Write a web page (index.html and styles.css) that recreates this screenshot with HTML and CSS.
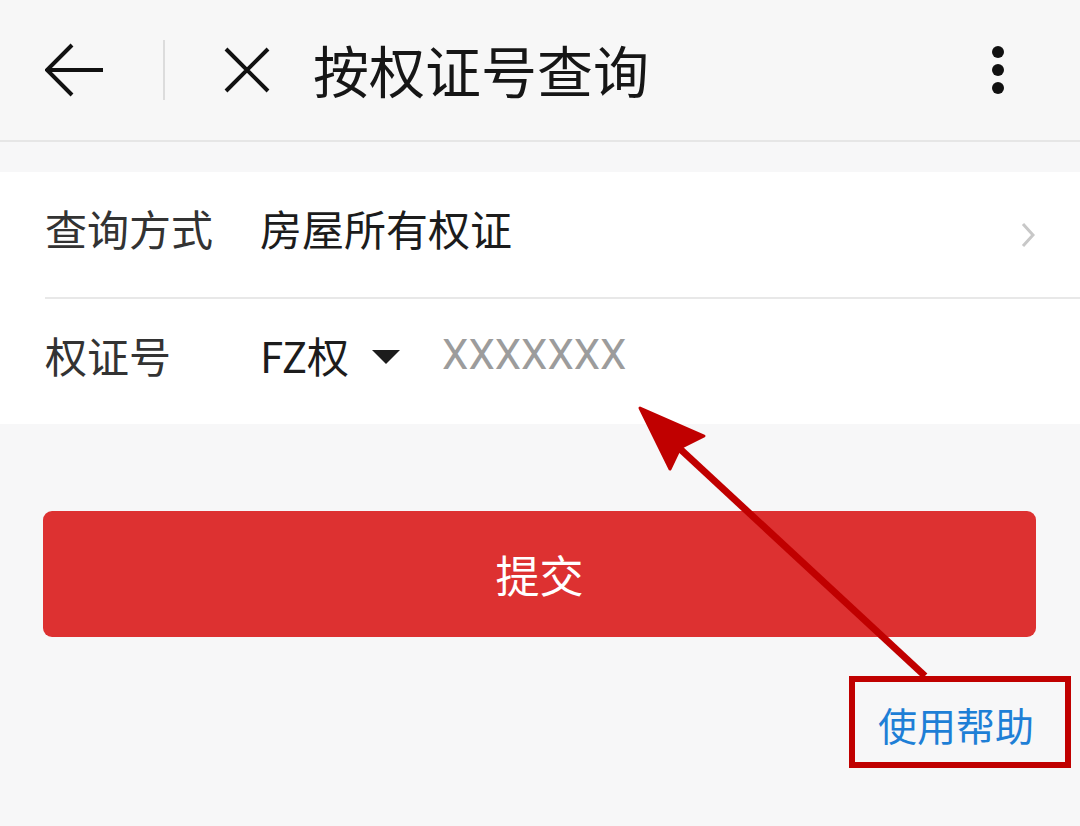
FILE: index.html
```html
<!DOCTYPE html>
<html lang="zh-CN">

<head>
  <meta charset="UTF-8" />
  <title>按权证号查询</title>
  <link rel="stylesheet" href="styles.css">
</head>

<body>
  <div class="page">
    <!-- 顶部导航 -->
    <div class="header">
      <svg class="back" width="60" height="54" viewBox="0 0 60 54">
        <path d="M58 27H3M27 2L2 27L27 52" fill="none" stroke="#111" stroke-width="4" />
      </svg>
      <span class="divider"></span>
      <svg class="close" width="48" height="48" viewBox="0 0 48 48">
        <path d="M3 3L45 45M45 3L3 45" fill="none" stroke="#111" stroke-width="4" />
      </svg>
      <h1 class="title">按权证号查询</h1>
      <svg class="more" width="14" height="50" viewBox="0 0 14 50">
        <circle cx="7" cy="7" r="6" fill="#111" />
        <circle cx="7" cy="25" r="6" fill="#111" />
        <circle cx="7" cy="43" r="6" fill="#111" />
      </svg>
    </div>

    <!-- 查询表单 -->
    <div class="card">
      <div class="row">
        <span class="label">查询方式</span>
        <span class="value">房屋所有权证</span>
        <svg class="arrow" width="14" height="26" viewBox="0 0 14 26">
          <path d="M2 2L12 13L2 24" fill="none" stroke="#c8c8c8" stroke-width="3" />
        </svg>
      </div>
      <div class="line"></div>
      <div class="row">
        <span class="label">权证号</span>
        <span class="value">FZ权</span>
        <span class="caret"></span>
        <input class="input" type="text" placeholder="XXXXXXX" />
      </div>
    </div>

    <button class="submit">提交</button>

    <div class="help">
      <a class="help-link">使用帮助</a>
    </div>

    <!-- 标注 -->
    <svg class="mark" width="1080" height="826" viewBox="0 0 1080 826">
      <path d="M925 676L678 447" stroke="#c00000" stroke-width="7" fill="none" />
      <path d="M640 408L704 436L680 448L670 469Z" fill="#c00000" stroke="#c00000" stroke-width="3" stroke-linejoin="round" />
      <rect x="852" y="679" width="216" height="86" fill="none" stroke="#c00000" stroke-width="6" />
    </svg>
  </div>
</body>

</html>
```

FILE: styles.css
```css
body {
  margin: 0;
  padding: 0;
  background-color: #f7f7f8;
  font-family: "Noto Sans CJK SC", "Noto Sans", sans-serif;
  color: #1c1c1c;
}

.page {
  position: relative;
  width: 1080px;
  height: 826px;
  overflow: hidden;
}

.header {
  display: flex;
  align-items: center;
  height: 142px;
  padding-left: 45px;
  box-sizing: border-box;
  background-color: #f7f7f7;
  border-bottom: 2px solid #e6e6e6;
}

.divider {
  width: 2px;
  height: 60px;
  margin-left: 58px;
  background-color: #dcdcdc;
}

.close {
  margin-left: 58px;
}

.title {
  margin: 0 0 4px 42px;
  font-size: 56px;
  font-weight: normal;
  color: #161616;
}

.more {
  margin-left: auto;
  margin-right: 75px;
}

.card {
  margin-top: 30px;
  background-color: #fff;
}

.row {
  display: flex;
  align-items: center;
  height: 125px;
  padding: 0 45px 14px;
  box-sizing: border-box;
  font-size: 42px;
}

.row .label {
  width: 215px;
  color: #333;
}

.row .value {
  color: #1c1c1c;
}

.row .arrow {
  margin: 14px 0 0 auto;
}

.line {
  height: 2px;
  margin-left: 45px;
  background-color: #e8e8e8;
}

.caret {
  width: 0;
  height: 0;
  margin: 4px 0 0 23px;
  border-left: 14px solid transparent;
  border-right: 14px solid transparent;
  border-top: 14px solid #1c1c1c;
}

.input {
  flex: 1;
  margin-left: 42px;
  padding: 0;
  border: none;
  outline: none;
  font-family: Roboto, "Noto Sans CJK SC", sans-serif;
  font-size: 42px;
  color: #333;
  background: transparent;
}

.input::placeholder {
  color: #9c9c9c;
}

.submit {
  display: block;
  width: 993px;
  height: 126px;
  margin: 87px 0 0 43px;
  border: none;
  border-radius: 9px;
  background-color: #dd3131;
  font-family: inherit;
  font-size: 44px;
  color: #fff;
}

.help {
  display: flex;
  justify-content: flex-end;
  padding: 59px 46px 0 0;
}

.help-link {
  font-size: 39px;
  color: #1e7fd6;
}

.mark {
  position: absolute;
  left: 0;
  top: 0;
  pointer-events: none;
}
```
